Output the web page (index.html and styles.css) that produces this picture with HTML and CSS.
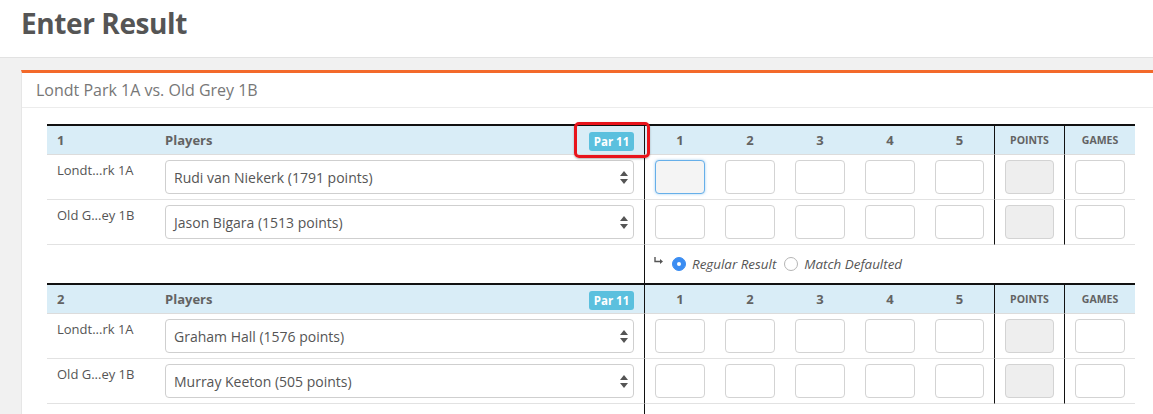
FILE: index.html
```html
<!DOCTYPE html>
<html lang="en">
<head>
<meta charset="utf-8">
<title>Enter Result</title>
<link rel="stylesheet" href="styles.css">
</head>
<body>
<header class="page-head">
  <h1 class="page-title">Enter Result</h1>
</header>
<main class="page-body">
  <section class="card">
    <div class="card-head">Londt Park 1A vs. Old Grey 1B</div>
    <div class="card-body">
      <table class="rubber">
        <colgroup>
          <col class="c-no"><col class="c-players"><col class="c-game"><col class="c-game"><col class="c-game"><col class="c-game"><col class="c-game"><col class="c-sum"><col class="c-sum">
        </colgroup>
        <thead>
          <tr>
            <th class="h-left">1</th>
            <th class="h-left h-players div-r">
              <div class="players-head"><span>Players</span><span class="badge">Par 11<span class="callout"></span></span></div>
            </th>
            <th>1</th><th>2</th><th>3</th><th>4</th><th class="div-r">5</th>
            <th class="h-small div-r">POINTS</th>
            <th class="h-small">GAMES</th>
          </tr>
        </thead>
        <tbody>
          <tr>
            <td class="team">Londt...rk 1A</td>
            <td class="div-r"><div class="select"><span>Rudi van Niekerk (1791 points)</span><svg class="caret" width="8" height="13" viewBox="0 0 8 13"><path d="M4 0 L8 5 L0 5 Z M0 8 L8 8 L4 13 Z" fill="#555"/></svg></div></td>
            <td><div class="box focus"></div></td><td><div class="box"></div></td><td><div class="box"></div></td><td><div class="box"></div></td><td class="div-r"><div class="box"></div></td>
            <td class="div-r"><div class="box off"></div></td>
            <td><div class="box"></div></td>
          </tr>
          <tr>
            <td class="team">Old G...ey 1B</td>
            <td class="div-r"><div class="select"><span>Jason Bigara (1513 points)</span><svg class="caret" width="8" height="13" viewBox="0 0 8 13"><path d="M4 0 L8 5 L0 5 Z M0 8 L8 8 L4 13 Z" fill="#555"/></svg></div></td>
            <td><div class="box"></div></td><td><div class="box"></div></td><td><div class="box"></div></td><td><div class="box"></div></td><td class="div-r"><div class="box"></div></td>
            <td class="div-r"><div class="box off"></div></td>
            <td><div class="box"></div></td>
          </tr>
          <tr class="result-row">
            <td colspan="2" class="div-r"></td>
            <td colspan="7">
              <div class="result-opts">
                <svg class="hook" width="9" height="7" viewBox="0 0 9 7"><path d="M1 0 V4.5 H7" fill="none" stroke="#555" stroke-width="1.4"/><path d="M6 2 L9 4.5 L6 7 Z" fill="#555"/></svg>
                <span class="radio on"></span><span class="radio-label">Regular Result</span>
                <span class="radio"></span><span class="radio-label">Match Defaulted</span>
              </div>
            </td>
          </tr>
        </tbody>
      </table>

      <table class="rubber">
        <colgroup>
          <col class="c-no"><col class="c-players"><col class="c-game"><col class="c-game"><col class="c-game"><col class="c-game"><col class="c-game"><col class="c-sum"><col class="c-sum">
        </colgroup>
        <thead>
          <tr>
            <th class="h-left">2</th>
            <th class="h-left h-players div-r">
              <div class="players-head"><span>Players</span><span class="badge">Par 11</span></div>
            </th>
            <th>1</th><th>2</th><th>3</th><th>4</th><th class="div-r">5</th>
            <th class="h-small div-r">POINTS</th>
            <th class="h-small">GAMES</th>
          </tr>
        </thead>
        <tbody>
          <tr>
            <td class="team">Londt...rk 1A</td>
            <td class="div-r"><div class="select"><span>Graham Hall (1576 points)</span><svg class="caret" width="8" height="13" viewBox="0 0 8 13"><path d="M4 0 L8 5 L0 5 Z M0 8 L8 8 L4 13 Z" fill="#555"/></svg></div></td>
            <td><div class="box"></div></td><td><div class="box"></div></td><td><div class="box"></div></td><td><div class="box"></div></td><td class="div-r"><div class="box"></div></td>
            <td class="div-r"><div class="box off"></div></td>
            <td><div class="box"></div></td>
          </tr>
          <tr>
            <td class="team">Old G...ey 1B</td>
            <td class="div-r"><div class="select"><span>Murray Keeton (505 points)</span><svg class="caret" width="8" height="13" viewBox="0 0 8 13"><path d="M4 0 L8 5 L0 5 Z M0 8 L8 8 L4 13 Z" fill="#555"/></svg></div></td>
            <td><div class="box"></div></td><td><div class="box"></div></td><td><div class="box"></div></td><td><div class="box"></div></td><td class="div-r"><div class="box"></div></td>
            <td class="div-r"><div class="box off"></div></td>
            <td><div class="box"></div></td>
          </tr>
          <tr class="result-row">
            <td colspan="2" class="div-r"></td>
            <td colspan="7"></td>
          </tr>
        </tbody>
      </table>
    </div>
  </section>
</main>
</body>
</html>
```

FILE: styles.css
```css
html, body {
  margin: 0;
  padding: 0;
}
body {
  background: #f1f1f1;
  font-family: "Open Sans", "Liberation Sans", sans-serif;
  color: #555;
  overflow: hidden;
}
.page-head {
  background: #fff;
  height: 58px;
  box-sizing: border-box;
  border-bottom: 1px solid #e2e2e2;
  padding: 3px 0 0 21px;
}
.page-title {
  margin: 0;
  font-size: 28px;
  line-height: 40px;
  font-weight: 700;
  color: #555;
  letter-spacing: -0.4px;
}
.page-body {
  padding: 12px 0 0 21px;
}
.card {
  background: #fff;
  border-top: 3px solid #f3692a;
  border-left: 1px solid #e6e6e6;
}
.card-head {
  height: 34px;
  line-height: 34px;
  padding: 0 14px;
  border-bottom: 1px solid #ececec;
  font-size: 16px;
  color: #777;
}
.card-body {
  padding: 16px 0 0 25px;
}
.rubber {
  table-layout: fixed;
  width: 1088px;
  border-collapse: separate;
  border-spacing: 0;
}
.c-no { width: 108px; }
.c-players { width: 490px; }
.c-game { width: 70px; }
.c-sum { width: 70px; }
.rubber th, .rubber td {
  box-sizing: border-box;
  padding: 0 10px;
}
.rubber th {
  height: 31px;
  background: #d9edf7;
  border-top: 2px solid #111;
  border-bottom: 1px solid #dcdcdc;
  font-size: 13px;
  font-weight: 700;
  color: #636363;
  text-align: center;
  vertical-align: middle;
}
.rubber th.h-left { text-align: left; }
.rubber th.h-small { font-size: 10.5px; }
.rubber .div-r { border-right: 1px solid #111; }
.players-head {
  display: flex;
  justify-content: space-between;
  align-items: center;
}
.badge {
  position: relative;
  display: inline-block;
  width: 45px;
  height: 19px;
  line-height: 19px;
  text-align: center;
  background: #5bc0de;
  color: #fff;
  font-size: 11.5px;
  font-weight: 700;
  border-radius: 3px;
  margin-top: 2px;
}
.callout {
  position: absolute;
  left: -15px;
  right: -16px;
  top: -10px;
  bottom: -7px;
  border: 3px solid #e8141c;
  border-radius: 5px;
  box-shadow: 0 1px 2px rgba(0,0,0,0.3);
}
.rubber td {
  height: 45px;
  padding: 5px 10px;
  border-bottom: 1px solid #e2e2e2;
  vertical-align: middle;
}
.rubber td.team {
  vertical-align: top;
  padding-top: 6px;
  font-size: 13px;
  line-height: 18px;
  color: #555;
}
.select {
  height: 34px;
  box-sizing: border-box;
  border: 1px solid #cfcfcf;
  border-radius: 4px;
  display: flex;
  align-items: center;
  justify-content: space-between;
  padding: 0 5px 0 8px;
  font-size: 14px;
  color: #555;
}
.caret { display: block; }
.box {
  height: 34px;
  box-sizing: border-box;
  border: 1px solid #d3d3d3;
  border-radius: 4px;
  background: #fff;
}
.box.focus {
  background: #f4f4f4;
  border-color: #66afe9;
  box-shadow: 0 0 3px rgba(102,175,233,0.6);
}
.box.off {
  background: #eee;
  border-color: #d3d3d3;
}
.result-row td {
  height: 38px;
  border-bottom: none;
  padding: 0 10px 0 9px;
}
.result-opts {
  display: flex;
  align-items: center;
  font-size: 13.4px;
  font-style: italic;
  color: #555;
}
.hook {
  display: block;
  margin-top: -8px;
  margin-right: 9px;
}
.radio {
  width: 14px;
  height: 14px;
  box-sizing: border-box;
  border-radius: 50%;
  border: 1px solid #b5b5b5;
  background: #fff;
  margin-right: 6px;
  position: relative;
}
.radio.on {
  background: #3b8df2;
  border-color: #3b8df2;
}
.radio.on::after {
  content: "";
  position: absolute;
  left: 4px;
  top: 4px;
  width: 4px;
  height: 4px;
  border-radius: 50%;
  background: #fff;
}
.radio-label {
  margin-right: 8px;
}
```
